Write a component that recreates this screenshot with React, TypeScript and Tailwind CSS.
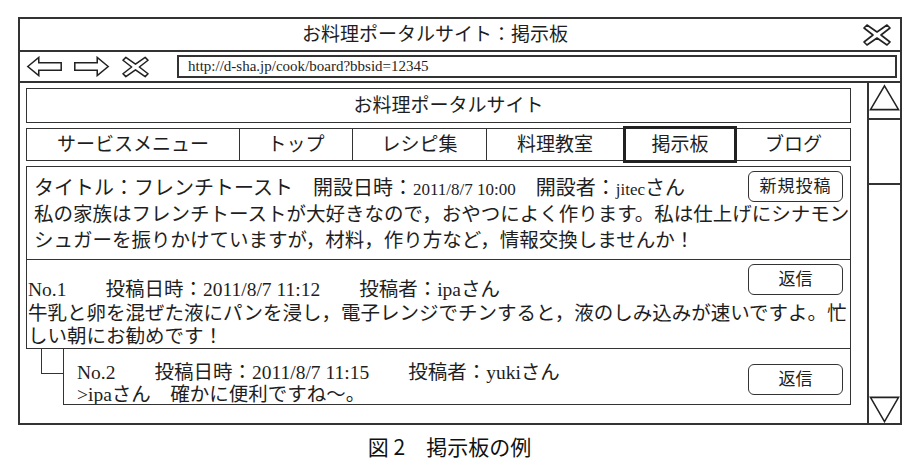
import React from "react";

const serif = "font-['Liberation_Serif','Noto_Sans_CJK_JP',serif]";

function CrossIcon({ className }: { className?: string }) {
  return (
    <svg viewBox="0 0 28 24" className={className} fill="none" stroke="#222" strokeWidth="1.6" strokeLinejoin="round">
      <path d="M4 2 L14 9 L24 2 L27 5 L18 12 L27 19 L24 22 L14 15 L4 22 L1 19 L10 12 L1 5 Z" />
    </svg>
  );
}

function ArrowIcon({ dir }: { dir: "left" | "right" }) {
  return (
    <svg
      viewBox="0 0 38 22"
      className={`w-[37px] h-[21px] ${dir === "right" ? "-scale-x-100" : ""}`}
      fill="none"
      stroke="#222"
      strokeWidth="1.6"
      strokeLinejoin="miter"
    >
      <path d="M1.5 11 L13 1.5 L13 7 L36.5 7 L36.5 15 L13 15 L13 20.5 Z" />
    </svg>
  );
}

function Button({ label, className = "" }: { label: string; className?: string }) {
  return (
    <div
      className={`flex items-center justify-center rounded-[6px] border-[1.5px] border-[#333] bg-white text-[17px] leading-none ${className}`}
    >
      {label}
    </div>
  );
}

const tabs = ["サービスメニュー", "トップ", "レシピ集", "料理教室", "掲示板", "ブログ"];
const tabWidths = ["w-[212px]", "w-[113px]", "w-[134px]", "w-[137px]", "w-[114px]", "flex-1"];

export default function App() {
  return (
    <div className={`w-[919px] h-[472px] bg-white text-[#1e1e1e] overflow-hidden ${serif}`}>
      <div className="pl-[18px] pt-[17px]">
        <div className="w-[884px] h-[408px] border-2 border-[#333] flex flex-col">
          {/* title bar */}
          <div className="h-[33px] border-b-2 border-[#333] flex items-center">
            <div className="flex-1 text-center text-[19px] leading-none pr-[8px]">お料理ポータルサイト：掲示板</div>
            <div className="w-[42px] flex justify-center pr-[4px]">
              <CrossIcon className="w-[28px] h-[24px]" />
            </div>
          </div>
          {/* browser toolbar */}
          <div className="h-[31px] border-b-2 border-[#333] flex items-center pl-[6px] pr-[3px]">
            <ArrowIcon dir="left" />
            <div className="w-[10px]" />
            <ArrowIcon dir="right" />
            <div className="w-[12px]" />
            <CrossIcon className="w-[27px] h-[24px]" />
            <div className="w-[28px]" />
            <div className="flex-1 h-[23px] border-2 border-[#333] flex items-center pl-[9px] text-[15px] leading-none">
              http://d-sha.jp/cook/board?bbsid=12345
            </div>
          </div>
          {/* content */}
          <div className="flex-1 flex min-h-0">
            <div className="flex-1 min-w-0 pl-[6px] pr-[16px] pt-[5px] flex flex-col">
              <div className="h-[35px] border-[1.5px] border-[#333] flex items-center justify-center pl-[20px] text-[19px] leading-none">
                お料理ポータルサイト
              </div>
              <div className="mt-[5px] h-[33px] border-[1.5px] border-[#333] flex">
                {tabs.map((t, i) => (
                  <div
                    key={t}
                    className={`${tabWidths[i]} flex items-center justify-center text-[19px] leading-none ${
                      i > 0 && i !== 4 && i !== 5 ? "border-l-[1.5px] border-[#333]" : ""
                    } ${i === 4 ? "relative -my-[3px] border-[3px] border-[#222]" : ""}`}
                  >
                    {t}
                  </div>
                ))}
              </div>

              {/* topic */}
              <div className="mt-[5px] border-[1.5px] border-[#333] pl-[7px] pr-[7px] pt-[4px] pb-[5px] overflow-hidden text-[20px]">
                <div className="flex items-center justify-between h-[31px]">
                  <div className="whitespace-nowrap leading-none pt-[2px]">
                    タイトル：フレンチトースト　開設日時：<span className="text-[17px]">2011/8/7 10:00</span>　開設者：
                    <span className="text-[17px]">jitec</span>さん
                  </div>
                  <Button label="新規投稿" className="w-[95px] h-[31px] tracking-[1px]" />
                </div>
                <div className="whitespace-nowrap leading-[26px] text-[19.5px] -mr-[12px]">
                  私の家族はフレンチトーストが大好きなので，おやつによく作ります。私は仕上げにシナモン
                  <br />
                  シュガーを振りかけていますが，材料，作り方など，情報交換しませんか！
                </div>
              </div>

              {/* No.1 */}
              <div className="relative border-x-[1.5px] border-b-[1.5px] border-[#333] h-[89px] pl-[1px] pt-[18px] text-[19.5px] leading-[23.5px] overflow-hidden">
                <div className="whitespace-nowrap">No.1　　投稿日時：2011/8/7 11:12　　投稿者：ipaさん</div>
                <div className="whitespace-nowrap">
                  牛乳と卵を混ぜた液にパンを浸し，電子レンジでチンすると，液のしみ込みが速いですよ。忙
                  <br />
                  しい朝にお勧めです！
                </div>
                <Button label="返信" className="absolute right-[7px] top-[4px] w-[95px] h-[31px]" />
              </div>

              {/* No.2 */}
              <div className="flex h-[56px]">
                <div className="w-[37px] shrink-0">
                  <div className="ml-[15px] w-[22px] h-[25px] border-l-[1.5px] border-b-[1.5px] border-[#333]" />
                </div>
                <div className="flex-1 min-w-0 relative border-l-[1.5px] border-r-[1.5px] border-b-[1.5px] border-[#333] pl-[13px] pt-[13px] text-[19.5px] leading-[22px] overflow-hidden">
                  <div className="whitespace-nowrap">No.2　　投稿日時：2011/8/7 11:15　　投稿者：yukiさん</div>
                  <div className="whitespace-nowrap">&gt;ipaさん　確かに便利ですね～。</div>
                  <Button label="返信" className="absolute right-[7px] top-[15px] w-[95px] h-[31px]" />
                </div>
              </div>
            </div>

            {/* scrollbar */}
            <div className="w-[33px] shrink-0 border-l-2 border-[#333] flex flex-col">
              <div className="h-[37px] border-b-2 border-[#333] flex items-start justify-center pt-[1px]">
                <svg viewBox="0 0 32 27" className="w-[31px] h-[27px]" fill="none" stroke="#222" strokeWidth="1.6">
                  <path d="M16 1.5 L30.5 26 L1.5 26 Z" />
                </svg>
              </div>
              <div className="h-[65px] border-b-2 border-[#333]" />
              <div className="flex-1" />
              <svg viewBox="0 0 32 27" className="w-[31px] h-[27px] block" fill="none" stroke="#222" strokeWidth="1.6">
                <path d="M1.5 1 L30.5 1 L16 26 Z" />
              </svg>
            </div>
          </div>
        </div>
        <div className="-ml-[18px] mt-[11px] pr-[20px] text-center text-[21px] leading-none font-['Noto_Sans_CJK_JP',sans-serif] text-[#111]">
          図 2　掲示板の例
        </div>
      </div>
    </div>
  );
}
